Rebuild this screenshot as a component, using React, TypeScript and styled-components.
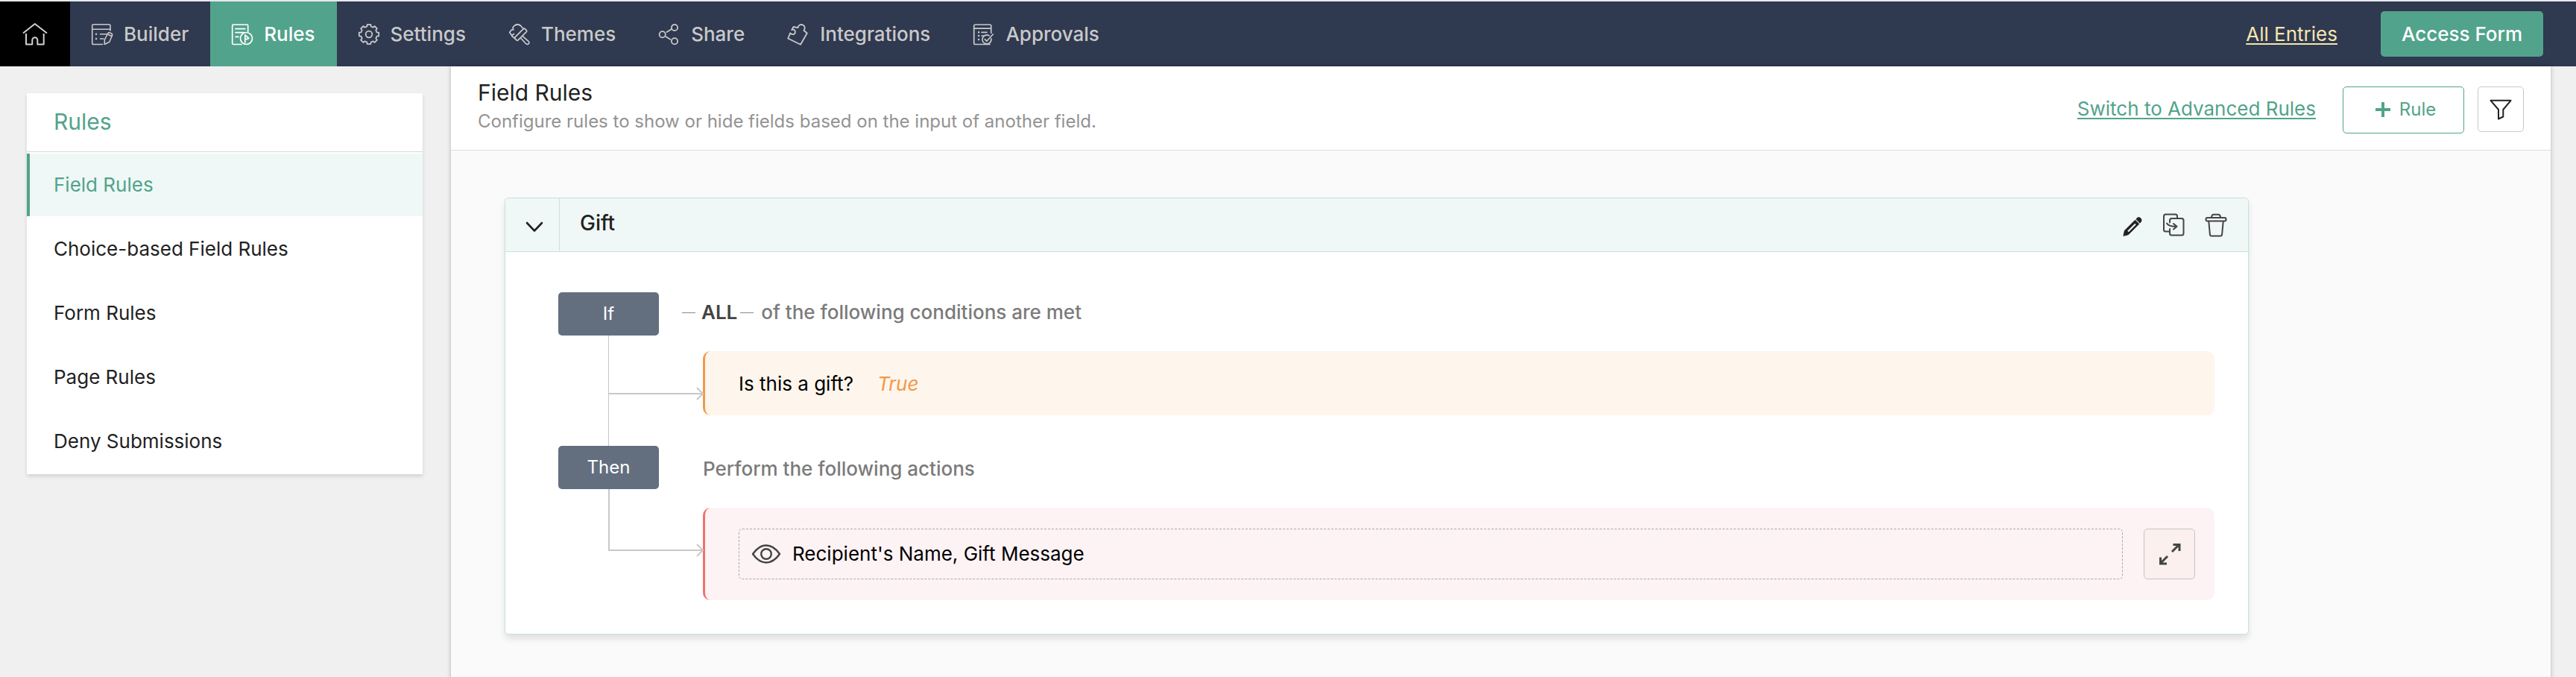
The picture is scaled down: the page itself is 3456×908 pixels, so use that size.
import React from 'react';
import styled, { createGlobalStyle, css } from 'styled-components';

const green = '#52a38b';
const mint = '#eff8f6';
const mintLine = '#c3e4da';
const rail = '#c8c8c8';

const GlobalStyle = createGlobalStyle`
  *, *::before, *::after { box-sizing: border-box; }
  body {
    margin: 0;
    background: #f0f0f0;
    color: #222;
    font-family: Inter, "Liberation Sans", sans-serif;
    font-size: 26px;
    line-height: 36px;
    font-optical-sizing: none;
  }
  h1, h2, h3, p, ul { margin: 0; padding: 0; }
  button { font: inherit; color: inherit; cursor: pointer; }
`;

const Page = styled.div`
  min-height: 100vh;
  display: flex;
  flex-direction: column;
`;

/* ---------- top bar ---------- */

const TopBar = styled.header`
  display: flex;
  align-items: center;
  height: 89px;
  padding-right: 44px;
  border-top: 2px solid #e6e8ec;
  background: #2f3950;
`;

const Tabs = styled.nav`
  display: flex;
  align-self: stretch;
  flex: 1;
`;

const HomeLink = styled.a`
  display: flex;
  align-items: center;
  justify-content: center;
  width: 94px;
  background: #000;
  color: #d0d0d0;
`;

const Tab = styled.a<{ $active?: boolean }>`
  display: flex;
  align-items: center;
  gap: 14px;
  padding: 0 29px 0 28px;
  color: ${(p) => (p.$active ? '#fff' : '#c9c9c9')};
  background: ${(p) => (p.$active ? green : 'transparent')};
  font-weight: 500;
  text-decoration: none;
  white-space: nowrap;
`;

const EntriesLink = styled.a`
  margin-right: 58px;
  color: #f5e6ae;
  text-decoration-thickness: 2px;
  text-underline-offset: 3px;
  white-space: nowrap;
`;

const AccessButton = styled.button`
  height: 61px;
  padding: 0 28px;
  border: 0;
  border-radius: 5px;
  background: ${green};
  color: #fff;
  font-weight: 500;
  white-space: nowrap;
`;

/* ---------- columns ---------- */

const Columns = styled.div`
  flex: 1;
  display: flex;
  padding-right: 34px;
`;

const Sidebar = styled.aside`
  flex: none;
  width: 605px;
  padding: 36px 38px 36px 36px;
`;

const SideCard = styled.div`
  background: #fff;
  box-shadow: 0 3px 5px rgba(0, 0, 0, 0.12);
`;

const SideTitle = styled.h2`
  padding: 18px 36px 20px;
  border-bottom: 1px solid #d8d8d8;
  color: ${green};
  font-size: 30px;
  font-weight: 400;
  line-height: 40px;
`;

const SideList = styled.ul`
  display: flex;
  flex-direction: column;
  gap: 2px;
  padding: 2px 0;
  list-style: none;
`;

const SideLink = styled.a<{ $active?: boolean }>`
  display: block;
  padding: 24px 32px;
  border-left: 4px solid ${(p) => (p.$active ? green : 'transparent')};
  background: ${(p) => (p.$active ? mint : 'transparent')};
  color: ${(p) => (p.$active ? green : '#222')};
  text-decoration: none;
`;

const Main = styled.main`
  flex: 1;
  min-width: 0;
  background: #fafafa;
  box-shadow: 0 0 6px rgba(0, 0, 0, 0.25);
`;

const MainHeader = styled.div`
  display: flex;
  align-items: flex-start;
  padding: 16px 36px 18px;
  border-bottom: 1px solid #dcdcdc;
  background: #fff;
`;

const Heading = styled.div`
  flex: 1;
`;

const Title = styled.h1`
  font-size: 30px;
  font-weight: 400;
  line-height: 38px;
`;

const Subtitle = styled.p`
  color: #939393;
  font-size: 24px;
  line-height: 40px;
`;

const Controls = styled.div`
  display: flex;
  align-items: flex-start;
  padding-top: 11px;
`;

const SwitchLink = styled.a`
  margin-right: 36px;
  color: ${green};
  line-height: 60px;
  text-decoration-thickness: 2px;
  text-underline-offset: 3px;
`;

const AddRuleButton = styled.button`
  display: flex;
  align-items: center;
  justify-content: center;
  gap: 12px;
  width: 163px;
  height: 63px;
  margin-right: 18px;
  padding: 0 0 2px 6px;
  border: 1px solid ${green};
  border-radius: 5px;
  background: #fff;
  color: ${green};
  font-size: 24px;
`;

const FilterButton = styled.button`
  display: flex;
  align-items: center;
  justify-content: center;
  width: 62px;
  height: 61px;
  padding: 0;
  border: 1px solid #c8c8c8;
  border-radius: 5px;
  background: #fff;
`;

/* ---------- rule card ---------- */

const Canvas = styled.div`
  padding: 63px 72px;
`;

const RuleCard = styled.section`
  max-width: 2340px;
  border: 1px solid ${mintLine};
  border-radius: 5px;
  background: #fff;
  box-shadow: 0 6px 8px rgba(0, 0, 0, 0.1);
`;

const RuleHeader = styled.div`
  display: flex;
  align-items: stretch;
  height: 72px;
  padding-right: 25px;
  border-bottom: 1px solid ${mintLine};
  border-radius: 5px 5px 0 0;
  background: ${mint};
`;

const IconButton = styled.button`
  display: flex;
  align-items: center;
  justify-content: center;
  padding: 0;
  border: 0;
  background: none;
`;

const CollapseButton = styled(IconButton)`
  width: 73px;
  padding: 6px 0 0 5px;
  border-right: 1px solid #cfe0dc;
`;

const RuleName = styled.h3`
  flex: 1;
  padding: 15px 27px;
  font-size: 28px;
  font-weight: 500;
`;

const RuleActions = styled.div`
  display: flex;
  gap: 20px;
`;

const RuleBody = styled.div`
  padding: 54px 45px 45px 71px;
`;

const Stage = styled.div`
  display: grid;
  grid-template-columns: 194px 1fr;
`;

const Rail = styled.div`
  display: flex;
  flex-direction: column;
`;

const Badge = styled.div`
  width: 135px;
  border-radius: 5px;
  background: #636f7f;
  color: #fff;
  font-size: 24px;
  line-height: 58px;
  text-align: center;
`;

const Branch = styled.div<{ $last?: boolean }>`
  position: relative;
  height: ${(p) => (p.$last ? 83 : 79)}px;
  margin-left: 67px;
  border-bottom: 2px solid ${rail};
  border-left: ${(p) => (p.$last ? 2 : 1)}px solid ${rail};
`;

const ArrowHead = styled.svg`
  position: absolute;
  right: -2px;
  bottom: -10px;
`;

const Stem = styled.div`
  flex: 1;
  margin-left: 67px;
  border-left: 1px solid ${rail};
`;

const StageContent = styled.div<{ $last?: boolean }>`
  padding: ${(p) => (p.$last ? '4px 0 0' : '0 0 41px')};
  min-width: 0;
`;

const StageLabel = styled.p`
  display: flex;
  align-items: center;
  height: 54px;
  margin-bottom: 25px;
  color: #7b7b7b;
  font-weight: 500;
`;

const MatchMode = styled.span`
  display: flex;
  align-items: center;
  margin: 0 10px 0 -28px;
  color: #444;
  font-weight: 600;

  &::before, &::after {
    content: '';
    width: 18px;
    height: 1px;
    background: #888;
  }
  &::before { margin-right: 8px; }
  &::after { margin-left: 4px; }
`;

const Panel = styled.div<{ $tone: 'orange' | 'red' }>`
  display: flex;
  align-items: center;
  border-radius: 10px;
  color: #000;
  ${(p) =>
    p.$tone === 'orange'
      ? css`
          padding: 26px 45px 24px;
          border-left: 3px solid #f2994a;
          background: #fef5ec;
        `
      : css`
          gap: 28px;
          padding: 28px 26px 28px 45px;
          border-left: 3px solid #f07070;
          background: #fdf3f4;
        `}
`;

const Answer = styled.em`
  margin-left: 32px;
  color: #f2994a;
`;

const FieldList = styled.div`
  flex: 1;
  display: flex;
  align-items: center;
  gap: 15px;
  height: 68px;
  padding: 0 16px;
  border: 1px dashed #aaa;
  border-radius: 5px;
`;

const ExpandButton = styled(IconButton)`
  width: 69px;
  height: 68px;
  border: 1px solid #c4c4c8;
  border-radius: 5px;
  background: #fbf0ee;
`;

/* ---------- icons ---------- */

type IconProps = { w?: number; h?: number; sw?: number; color?: string; children: React.ReactNode };
const Icon = ({ w = 30, h = 30, sw = 2, color = 'currentColor', children }: IconProps) => (
  <svg width={w} height={h} viewBox={`0 0 ${w} ${h}`} fill="none" stroke={color} strokeWidth={sw}
    strokeLinecap="round" strokeLinejoin="round" aria-hidden="true">
    {children}
  </svg>
);

const HomeIcon = () => (
  <Icon w={34} h={31}>
    <path d="M1 14.5 16.8 2 33 14.5M5 15v14.5h8.3v-5.8a3.5 3.5 0 0 1 7 0v5.8h8.4V15" strokeLinecap="butt" />
  </Icon>
);

const BuilderIcon = () => (
  <Icon sw={1.6}>
    <path d="M15.7 28.5H3.5a1.8 1.8 0 0 1-1.8-1.8V3.5a1.8 1.8 0 0 1 1.8-1.8h20.7a1.8 1.8 0 0 1 1.8 1.8V10M1.7 8.2H26M12.5 14.7H21M12.5 21H17" />
    <path d="M18.3 28.5v-6l4.2-8.5q1-2 3-1l1.8.8q1.9 1 1.1 3l-3.6 8.5zM22 14.8l5.8 2.7" />
    <path d="M7 14.7h.1M7 21h.1" strokeWidth="2.4" />
  </Icon>
);

const RulesIcon = () => (
  <Icon sw={1.7}>
    <path d="M14 28.5H3.2a1.5 1.5 0 0 1-1.5-1.5V3.5A1.5 1.5 0 0 1 3.2 2h18a1.5 1.5 0 0 1 1.5 1.5v7.7M6 7.7h12.7M6 12.7h12M6 18.3h4" />
    <circle cx="20.5" cy="20.5" r="8" />
    <path d="M18.8 25.8V15.8l5 4.6-5 1.8" />
  </Icon>
);

const gearPath = (() => {
  const pts: string[] = [];
  for (let i = 0; i < 8; i++) {
    const a = (i * Math.PI) / 4 - Math.PI / 2;
    ([[-0.25, 10.8], [-0.17, 13.4], [0.17, 13.4], [0.25, 10.8]] as const).forEach(([d, r]) => {
      pts.push(`${(15 + r * Math.cos(a + d)).toFixed(1)} ${(15 + r * Math.sin(a + d)).toFixed(1)}`);
    });
  }
  return `M${pts.join('L')}Z`;
})();

const SettingsIcon = () => (
  <Icon sw={1.8}>
    <path d={gearPath} />
    <circle cx="15" cy="15" r="4.3" />
  </Icon>
);

const ThemesIcon = () => (
  <Icon sw={1.7}>
    <path d="M20.3 7.7 16.5 3.5Q12.500 0 8 3.500l-2 2.200.8 3.100-2.800.4L1.700 12.500l2.800 4 3-2M5 17.500l3.700 3" />
    <path d="M20.3 7.7q1-.9 2 0l2 2q1 1 0 2L13 22.800q-1 .9-2 0l-2-2q-1-1 0-2z" />
    <path d="m19.5 17.8 7.500 6.500q1.800 2 0 3.500t-3.500-.3L17 20.500" />
  </Icon>
);

const ShareIcon = () => (
  <Icon sw={1.8}>
    <circle cx="5.7" cy="15.3" r="4.1" />
    <circle cx="22" cy="6" r="4.1" />
    <circle cx="22" cy="24.3" r="4.1" />
    <path d="m11.5 12 6.5-4M10.5 18.2l5.7 3.5" />
  </Icon>
);

const IntegrationsIcon = () => (
  <Icon sw={1.8}>
    <path d="m1.2 20.5 3-7.2c1.6 2.6 5.8 2.4 6.6-.6.8-3-1.8-5-4.6-3.6L8.5 5l6 1.2c.4-3.4 3.6-5 6.5-3.8 3.2 1.5 3.4 4.6 1.5 7.6l4.3 3.500L18 28.800z" />
  </Icon>
);

const ApprovalsIcon = () => (
  <Icon sw={1.7}>
    <path d="M23 28.5H3.5a1.8 1.8 0 0 1-1.8-1.8V3.8A1.8 1.8 0 0 1 3.5 2h19.4a1.8 1.8 0 0 1 1.8 1.8v9.5M1.7 7.200h23M12 12.300h7M12 17h3.500" />
    <path d="M8 12.3h.1M8 17h.1M8 22h.1" strokeWidth="2.4" />
    <path d="M22 16.8a6 6 0 1 0 2.8 4M16.3 21.7l2.5 2.5L27.2 15" />
  </Icon>
);

const PlusIcon = () => (
  <Icon w={20} h={20} sw={4}>
    <path d="M10 0v20M0 10h20" strokeLinecap="butt" />
  </Icon>
);

const FilterIcon = () => (
  <Icon w={30} h={28}>
    <path d="M1.5 1.8h27L18.3 14v9.500L12 26.500V14z" />
  </Icon>
);

const ChevronIcon = () => (
  <Icon w={24} h={16} sw={2.6}>
    <path d="m2 2 10 10.5L22 2" />
  </Icon>
);

const PencilIcon = () => (
  <Icon w={36} h={36} sw={1} color="#222">
    <path d="M6 32 7.5 25.2 21.5 11.2l5.2 5.2L12.7 30.4z" fill="#222" />
    <path d="m23 9.7 1.7-1.6q2-1.2 4.2.6 1.900 2.200.7 4.400L28 14.900z" fill="#222" />
    <path d="m12 26.5 10-10" stroke={mint} strokeWidth="2.2" strokeLinecap="butt" />
  </Icon>
);

const CopyIcon = () => (
  <Icon w={36} h={36} color="#444">
    <path d="M11 26.5H6.5a2.5 2.5 0 0 1-2.5-2.5V6a2.5 2.5 0 0 1 2.5-2.5h13A2.5 2.5 0 0 1 22 6v2.5" />
    <path d="M12 14.5V11.5A2.5 2.5 0 0 1 14.5 9H28a2.5 2.5 0 0 1 2.5 2.5v17.5a2.5 2.5 0 0 1-2.5 2.5H14.5A2.5 2.5 0 0 1 12 29v-6" />
    <path d="M8 15.5q2.5 4.500 13 4.200M17 16l4.500 3.700L17 23.500" />
  </Icon>
);

const TrashIcon = () => (
  <Icon w={36} h={36} color="#444">
    <rect x="4.5" y="8" width="27" height="4.6" rx="2" />
    <path d="M12 7.5q.5-3.7 2.5-3.7h7q2 0 2.5 3.7M8.3 13l1.6 17.5q.2 2 2 2h12.2q1.800 0 2-2L27.700 13" />
  </Icon>
);

const EyeIcon = () => (
  <Icon w={40} h={28} sw={2.4} color="#444">
    <path d="M2 14Q10 2.500 20 2.500T38 14Q30 25.500 20 25.500T2 14z" />
    <circle cx="20" cy="14" r="6.8" />
  </Icon>
);

const ExpandIcon = () => (
  <Icon w={32} h={32} sw={3} color="#444">
    <path d="M19 13 28 4M20.5 3.500h8.500V12M13 19l-9 9M3.500 20.500V29H12" strokeLinecap="butt" strokeLinejoin="miter" />
  </Icon>
);

const Arrow = () => (
  <ArrowHead width="12" height="18" viewBox="0 0 12 18" fill="none" stroke={rail} strokeWidth="2" aria-hidden="true">
    <path d="m2 1 8 8-8 8" />
  </ArrowHead>
);

/* ---------- data ---------- */

const tabs = [
  { name: 'Builder', icon: BuilderIcon },
  { name: 'Rules', icon: RulesIcon },
  { name: 'Settings', icon: SettingsIcon },
  { name: 'Themes', icon: ThemesIcon },
  { name: 'Share', icon: ShareIcon },
  { name: 'Integrations', icon: IntegrationsIcon },
  { name: 'Approvals', icon: ApprovalsIcon },
];

const sections = ['Field Rules', 'Choice-based Field Rules', 'Form Rules', 'Page Rules', 'Deny Submissions'];

export default function App() {
  return (
    <Page>
      <GlobalStyle />
      <TopBar>
        <Tabs>
          <HomeLink href="#home" aria-label="Home"><HomeIcon /></HomeLink>
          {tabs.map(({ name, icon: TabIcon }) => (
            <Tab key={name} href={`#${name.toLowerCase()}`} $active={name === 'Rules'}>
              <TabIcon />
              {name}
            </Tab>
          ))}
        </Tabs>
        <EntriesLink href="#entries">All Entries</EntriesLink>
        <AccessButton type="button">Access Form</AccessButton>
      </TopBar>

      <Columns>
        <Sidebar>
          <SideCard>
            <SideTitle>Rules</SideTitle>
            <SideList>
              {sections.map((name, i) => (
                <li key={name}><SideLink href="#rules" $active={i === 0}>{name}</SideLink></li>
              ))}
            </SideList>
          </SideCard>
        </Sidebar>

        <Main>
          <MainHeader>
            <Heading>
              <Title>Field Rules</Title>
              <Subtitle>Configure rules to show or hide fields based on the input of another field.</Subtitle>
            </Heading>
            <Controls>
              <SwitchLink href="#advanced">Switch to Advanced Rules</SwitchLink>
              <AddRuleButton type="button"><PlusIcon />Rule</AddRuleButton>
              <FilterButton type="button" aria-label="Filter"><FilterIcon /></FilterButton>
            </Controls>
          </MainHeader>

          <Canvas>
            <RuleCard>
              <RuleHeader>
                <CollapseButton type="button" aria-label="Collapse"><ChevronIcon /></CollapseButton>
                <RuleName>Gift</RuleName>
                <RuleActions>
                  <IconButton type="button" aria-label="Edit"><PencilIcon /></IconButton>
                  <IconButton type="button" aria-label="Duplicate"><CopyIcon /></IconButton>
                  <IconButton type="button" aria-label="Delete"><TrashIcon /></IconButton>
                </RuleActions>
              </RuleHeader>
              <RuleBody>
                <Stage>
                  <Rail>
                    <Badge>If</Badge>
                    <Branch><Arrow /></Branch>
                    <Stem />
                  </Rail>
                  <StageContent>
                    <StageLabel><MatchMode>ALL</MatchMode>of the following conditions are met</StageLabel>
                    <Panel $tone="orange">Is this a gift?<Answer>True</Answer></Panel>
                  </StageContent>
                </Stage>
                <Stage>
                  <Rail>
                    <Badge>Then</Badge>
                    <Branch $last><Arrow /></Branch>
                  </Rail>
                  <StageContent $last>
                    <StageLabel>Perform the following actions</StageLabel>
                    <Panel $tone="red">
                      <FieldList><EyeIcon />Recipient's Name, Gift Message</FieldList>
                      <ExpandButton type="button" aria-label="Expand"><ExpandIcon /></ExpandButton>
                    </Panel>
                  </StageContent>
                </Stage>
              </RuleBody>
            </RuleCard>
          </Canvas>
        </Main>
      </Columns>
    </Page>
  );
}
